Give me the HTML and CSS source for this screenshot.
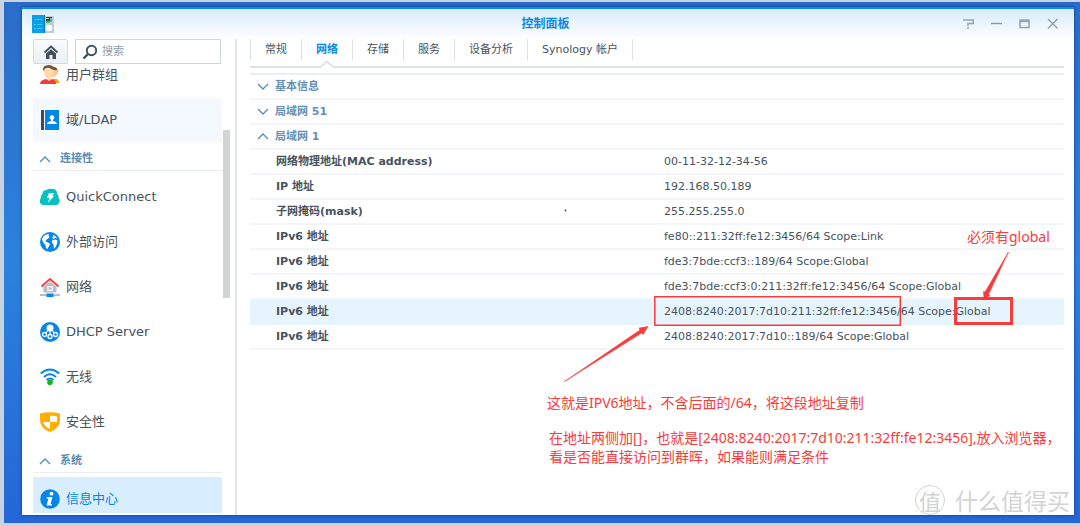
FILE: index.html
```html
<!DOCTYPE html>
<html lang="zh-CN">
<head>
<meta charset="utf-8">
<meta name="viewport" content="width=device-width, initial-scale=1">
<title>控制面板</title>
<link rel="stylesheet" href="styles.css">
</head>
<body>
<div class="desktop">
<div class="window">
  <header class="titlebar">
    <svg class="app-icon" width="22" height="18" viewBox="0 0 22 18"><path fill="#0aa0e8" d="M0 0h12v18H0z"/><path fill="#0876bd" d="M12 0h1v18h-1z"/><path fill="#c3ccd4" d="M13 1h9v17h-9z"/><path stroke="#35c6f5" d="M2 4.500h8M2 9.500h8M2 13.500h8" stroke-dasharray="2 1 5 0"/><path fill="#2d4658" d="M14 2h6v5h-6z"/><path fill="#ffd23b" d="M14 3h3v1h-3z"/><path fill="#49c43f" d="M14 6h4v2h-4z"/><path fill="#30baf0" d="M18 3h2v4h-2z"/><circle cx="17" cy="13" r="3.300" fill="#fff"/></svg>
    <h1 class="title">控制面板</h1>
    <div class="controls">
      <button aria-label="帮助"><svg width="12" height="12" viewBox="0 0 12 12"><path d="M0 2h10.200v3.500H5V8M4 10h2" fill="none" stroke="#99a5b0" stroke-width="1.600"/></svg></button>
      <button aria-label="最小化"><svg width="12" height="12" viewBox="0 0 12 12"><path d="M0 5.500h11" stroke="#8d9aa5" stroke-width="1.400"/></svg></button>
      <button aria-label="最大化"><svg width="12" height="12" viewBox="0 0 12 12"><path d="M1 2h9v7.500H1zM1 3.500h9" fill="none" stroke="#99a5b0" stroke-width="1.600"/></svg></button>
      <button aria-label="关闭"><svg width="12" height="12" viewBox="0 0 12 12"><path d="M1 1l9.500 9.500M10.500 1L1 10.500" stroke="#8d9aa5" stroke-width="1.200"/></svg></button>
    </div>
  </header>
  <div class="body">
    <aside class="sidebar">
      <div class="toolbar">
        <button class="home" aria-label="主页"><svg width="16" height="16" viewBox="0 0 16 16"><path d="M1.500 8.500L8 2.500l6.500 6" fill="none" stroke="#43505b" stroke-width="1.800"/><path fill="#43505b" d="M3 9.500l5-4.300 5 4.300V15H9.500v-4h-3v4H3z"/></svg></button>
        <label class="search"><svg width="16" height="16" viewBox="0 0 16 16"><circle cx="9.500" cy="6.500" r="4.700" fill="none" stroke="#43505b" stroke-width="1.900"/><path d="M6 10l-4.500 4.500" stroke="#43505b" stroke-width="2.400"/></svg><input type="text" placeholder="搜索" aria-label="搜索"></label>
      </div>
      <nav class="nav">
        <a class="item first" href="#"><svg width="20" height="20" viewBox="0 0 20 20"><path fill="#f7a500" d="M13 14l4 0 3 4h-6z"/><circle cx="13.500" cy="6" r="4" fill="#7a4a2a"/><path fill="#f9c88d" d="M11 5h6q1 5-3 7h-3z"/><path fill="#fddba8" d="M4 5q5-3 10 0 0 6-3 8v3H7v-3Q4 11 4 5z"/><path fill="#7c5335" d="M3 6Q2 0 9 0q6 0 5.500 6L13 3H6L4 5z"/><path fill="#f43b3b" d="M0 19q0-4 6-5l3 2 3-2q4 1 4 5z"/></svg><span>用户群组</span></a>
        <a class="item hover" href="#"><svg width="20" height="20" viewBox="0 0 20 20"><path fill="#3c4a57" d="M1 0h3v20H1z"/><path fill="#0086e5" d="M5 0h14v20H5z"/><circle cx="12" cy="7.500" r="2.300" fill="#fff"/><path fill="#fff" d="M11 9h2v2q4 1 4 3H7q0-2 4-3z"/></svg><span>域/LDAP</span></a>
        <button class="group"><svg width="12" height="8" viewBox="0 0 12 8"><path d="M1 7l5-5 5 5"/></svg>连接性</button>
        <a class="item" href="#"><svg width="20" height="20" viewBox="0 0 20 20"><path fill="#06c1bd" d="M4 18a4 4 0 0 1-3-7Q.5 8 2.500 7 2.500 3 6.500 3 9 1 13 2q4 0 4 4.500 2 1.500 1.500 4.500 1.500 2 1 4-.8 3-3.800 3z"/><path fill="#fff" d="M9 6h5l-1.500 3H14l-6 7 1.300-5H7z"/></svg><span>QuickConnect</span></a>
        <a class="item" href="#"><svg width="20" height="20" viewBox="0 0 20 20"><circle cx="10" cy="10" r="10" fill="#0787e5"/><path fill="#fff" d="M3 5q2-3 6-3l-.5 1.500L9.500 5 8 6.500 6 8 5.500 9.500 8 10.500l2 1.500-1 2-1.500 3-1.500-1-.5-3L4 11.500 2.500 9 2 7zM13 2.500q3 1.500 4.300 4L15 6l-1.500 1L12 5.500l1.500-1zM12 8.500l3-1 2.500 1-.5 3.500-2 4-1 .5-.5-4-1.500-1.500z"/></svg><span>外部访问</span></a>
        <a class="item" href="#"><svg width="20" height="20" viewBox="0 0 20 20"><path fill="#b5bec7" d="M3.500 10L10 4.500l6.500 5.500v5.500h-13z"/><path fill="#fff" d="M7.300 9h5.400v5H7.300z"/><path fill="#b5bec7" d="M8.500 10.200h3v2.600h-3zM0 17h20v2H0z"/><path fill="#0787e5" d="M6.500 16.500h7v3.500h-7z"/><path d="M1.500 9.500L10 2l8.500 7.500" fill="none" stroke="#f64040" stroke-width="2"/></svg><span>网络</span></a>
        <a class="item" href="#"><svg width="20" height="20" viewBox="0 0 20 20"><circle cx="10" cy="10" r="10" fill="#0787e5"/><circle cx="10" cy="6" r="3.500" fill="#fff"/><path d="M10 7v5M8 8l-3 4M12 8l3 4" stroke="#fff" stroke-width="1.200"/><g fill="#0787e5" stroke="#fff" stroke-width="1.300"><circle cx="4.500" cy="12.500" r="2"/><circle cx="10" cy="14.500" r="2"/><circle cx="15.500" cy="12.500" r="2"/></g></svg><span>DHCP Server</span></a>
        <a class="item" href="#"><svg width="20" height="20" viewBox="0 0 20 20"><path d="M.7 6.500Q10-1.500 19.300 6.500M4 10q6-5.500 12 0M6.500 13q3.500-3 7 0" fill="none" stroke="#0787e5" stroke-width="1.900"/><circle cx="10" cy="15.300" r="2.800" fill="#12b51b"/></svg><span>无线</span></a>
        <a class="item" href="#"><svg width="20" height="20" viewBox="0 0 20 20"><path fill="#ffad00" d="M0 1.500q10-2.500 20 0V8q0 8-10 12Q0 16 0 8z"/><path fill="#fff" d="M10 3.500q4 0 7 1V10h-7zM3 10h7v7q-6-3-7-7z"/></svg><span>安全性</span></a>
        <button class="group">
          <svg width="12" height="8" viewBox="0 0 12 8"><path d="M1 7l5-5 5 5"/></svg>系统</button>
        <a class="item active" href="#"><svg width="20" height="20" viewBox="0 0 20 20"><circle cx="10" cy="10" r="9.800" fill="#0787e5"/><circle cx="11.500" cy="4.700" r="1.900" fill="#fff"/><path fill="#fff" d="M7 8h5.500l-2 7h1.500l-.5 1.500H6.500L8.500 9.500H6.500z"/></svg><span>信息中心</span></a>
      </nav>
      <div class="scrollbar"></div>
    </aside>
    <main class="content">
      <div class="tabs" role="tablist">
        <button role="tab">常规</button><button role="tab" class="selected">网络<svg class="notch" width="12" height="8" viewBox="0 0 12 8"><path fill="#fff" d="M0 8V6L6 1l6 5v2z"/><path d="M0 6.500l6-5 6 5" fill="none" stroke="#d9dcde" stroke-width="1.400"/></svg></button><button role="tab">存储</button><button role="tab">服务</button><button role="tab">设备分析</button><button role="tab">Synology 帐户</button>
      </div>
      <table class="info">
        <colgroup><col class="col-key"><col></colgroup>
        <tbody>
        <tr><th colspan="2"><button class="fold"><svg width="12" height="8" viewBox="0 0 12 8"><path d="M1 1l5 5 5-5"/></svg>基本信息</button></th></tr>
        <tr><th colspan="2"><button class="fold"><svg width="12" height="8" viewBox="0 0 12 8"><path d="M1 1l5 5 5-5"/></svg>局域网 51</button></th></tr>
        <tr><th colspan="2"><button class="fold"><svg width="12" height="8" viewBox="0 0 12 8"><path d="M1 6l5-5 5 5"/></svg>局域网 1</button></th></tr>
        <tr><th class="key" scope="row">网络物理地址(MAC address)</th><td>00-11-32-12-34-56</td></tr>
        <tr><th class="key" scope="row">IP 地址</th><td>192.168.50.189</td></tr>
        <tr><th class="key" scope="row">子网掩码(mask)</th><td>255.255.255.0</td></tr>
        <tr><th class="key" scope="row">IPv6 地址</th><td>fe80::211:32ff:fe12:3456/64 Scope:Link</td></tr>
        <tr><th class="key" scope="row">IPv6 地址</th><td>fde3:7bde:ccf3::189/64 Scope:Global</td></tr>
        <tr><th class="key" scope="row">IPv6 地址</th><td>fde3:7bde:ccf3:0:211:32ff:fe12:3456/64 Scope:Global</td></tr>
        <tr class="current"><th class="key" scope="row">IPv6 地址</th><td>2408:8240:2017:7d10:211:32ff:fe12:3456/64 Scope:Global</td></tr>
        <tr><th class="key" scope="row">IPv6 地址</th><td>2408:8240:2017:7d10::189/64 Scope:Global</td></tr>
        </tbody>
      </table>
      <svg class="marks" width="814" height="474" viewBox="0 0 814 474">
        <g fill="none" stroke="#fb3a3a"><path stroke-width="1.500" d="M404.800 257.800h245.500v28.400H404.800z"/><path stroke-width="3" d="M705.500 259.500h56v25h-56z"/></g>
        <path fill="#fb3a3a" stroke="#fb3a3a" stroke-width=".6" d="M314.500 342.500L390 291l-1-2 9-1.500-5 8-1.500-1.500zM758.500 213l-23.500 40-1.500-.5.500 7.500 6-3.500-1.500-1z"/>
        <circle cx="315.500" cy="171.500" r="1" fill="#444"/>
      </svg>
      <p class="note note-scope">必须有global</p>
      <p class="note note-address">这就是IPV6地址，不含后面的/64，将这段地址复制</p>
      <p class="note note-browser">在地址两侧加[]，也就是[2408:8240:2017:7d10:211:32ff:fe12:3456],放入浏览器，<br>看是否能直接访问到群晖，如果能则满足条件</p>
    </main>
  </div>
  <div class="watermark"><span class="seal">值</span><span>什么值得买</span></div>
</div>
</div>
</body>
</html>
```
FILE: styles.css
```css
* { box-sizing: border-box; }
body {
  margin: 0;
  background: #c9d2df;
  color: #48525c;
  font: 11px/16px "DejaVu Sans", "Noto Sans CJK SC", sans-serif;
}
button, input { font: inherit; color: inherit; margin: 0; padding: 0; border: 0; background: none; }
button { cursor: pointer; }
a { color: inherit; text-decoration: none; }
svg { display: block; flex: none; }
.desktop {
  display: flex;
  height: 100vh;
  padding: 5px 6px 8px 18px;
  border: solid #c9d2df;
  border-width: 2px 0 3px 4px;
  background: linear-gradient(#2b6cc8, #2b82dc 50%, #2566d8);
}
.window {
  position: relative;
  flex: 1;
  display: flex;
  flex-direction: column;
  min-width: 0;
  border-top: 2px solid #078af0;
  background: #fff;
  box-shadow: 0 0 3px #0a3a80;
}
.titlebar {
  display: grid;
  grid-template-columns: 1fr auto 1fr;
  align-items: center;
  height: 30px;
  padding: 0 15px 0 10px;
  background: linear-gradient(#d8ebfb, #fff);
}
.title { margin: 0; font-size: 12px; line-height: 16px; color: #0787e5; }
.controls { display: flex; justify-content: flex-end; gap: 16px; }
.body { display: flex; flex: 1; min-height: 0; }
.sidebar {
  position: relative;
  display: flex;
  flex-direction: column;
  width: 215px;
  flex: none;
  padding: 0 14px 2px 11px;
  border-right: 2px solid #e2e5e8;
}
.toolbar { display: flex; gap: 7px; height: 25px; flex: none; }
.home {
  display: grid;
  place-items: center;
  width: 35px;
  border: 1px solid #d0dae3;
  border-radius: 2px;
  background: linear-gradient(#f9fbfd, #eaf0f6);
}
.search {
  display: flex;
  align-items: center;
  gap: 4px;
  flex: 1;
  min-width: 0;
  padding: 0 6px;
  border: 1px solid #ccd7e1;
}
.search input { width: 100%; min-width: 0; outline: 0; }
.search input::placeholder { color: #959ea6; opacity: 1; }
.nav { flex: 1; min-height: 0; overflow: hidden; display: flex; flex-direction: column; gap: 1px; width: 189px; }
.item {
  display: flex;
  align-items: center;
  gap: 6px;
  flex: none;
  height: 44px;
  padding-left: 7px;
  font-size: 13px;
  line-height: 20px;
}
.first { margin-top: -11px; }
.hover { background: #f3f9fe; }
.active { border-radius: 2px; background: #d8edfd; color: #0787e5; }
.group {
  display: flex;
  align-items: center;
  gap: 9px;
  flex: none;
  height: 28px;
  margin-bottom: 3px;
  padding: 4px 0 0 6px;
  border-bottom: 1px solid #e8eef4;
  color: #5b8bb0;
  font-weight: bold;
}
.group path, .fold path { fill: none; stroke: #5b8bb0; stroke-width: 1.3; }
.scrollbar { position: absolute; right: 5px; top: 91px; width: 7px; height: 168px; background: #d2d3d5; }
.content { position: relative; flex: 1; min-width: 0; padding: 0 10px 0 13px; }
.tabs { display: flex; height: 29px; padding-bottom: 6px; border-bottom: 2px solid #dfe0e1; }
.tabs button {
  position: relative;
  padding: 0 14px;
  border-right: 1px solid #dae3ec;
}
.tabs button:first-child { border-left: 1px solid #dae3ec; }
.tabs .selected { color: #0787e5; font-weight: bold; }
.notch { position: absolute; left: 50%; margin-left: -6px; bottom: -8px; }
.info {
  width: 100%;
  margin-top: 5px;
  border-collapse: separate;
  border-spacing: 0;
  border-top: 2px solid #e9eef6;
  table-layout: fixed;
}
.col-key { width: 414px; }
.info th, .info td { height: 25px; padding: 0; border-bottom: 2px solid #f2f5fa; text-align: left; white-space: nowrap; }
.info .key { padding-left: 26px; }
.fold { display: flex; align-items: center; gap: 6px; padding-left: 7px; color: #6490b3; font-weight: bold; }
.current th, .current td { background: #e6f4fe; border-color: #e6f4fe; }
.marks { position: absolute; left: 13px; top: 0; pointer-events: none; }
.note {
  position: absolute;
  margin: 0;
  color: #fb3a3a;
  font: 14px/19px "Noto Sans", "Noto Sans CJK SC", sans-serif;
  white-space: nowrap;
}
.note-scope { left: 730px; top: 188px; }
.note-address { left: 310px; top: 354px; }
.note-browser { left: 312px; top: 389px; }
.watermark {
  position: absolute;
  right: 4px;
  bottom: 0;
  display: flex;
  align-items: center;
  gap: 10px;
  color: #d3d3d3;
  font: 23px/30px "Noto Sans CJK SC", sans-serif;
}
.seal { width: 30px; border: 1px solid #d3d3d3; border-radius: 50%; font-size: 22px; line-height: 28px; text-align: center; }
```
